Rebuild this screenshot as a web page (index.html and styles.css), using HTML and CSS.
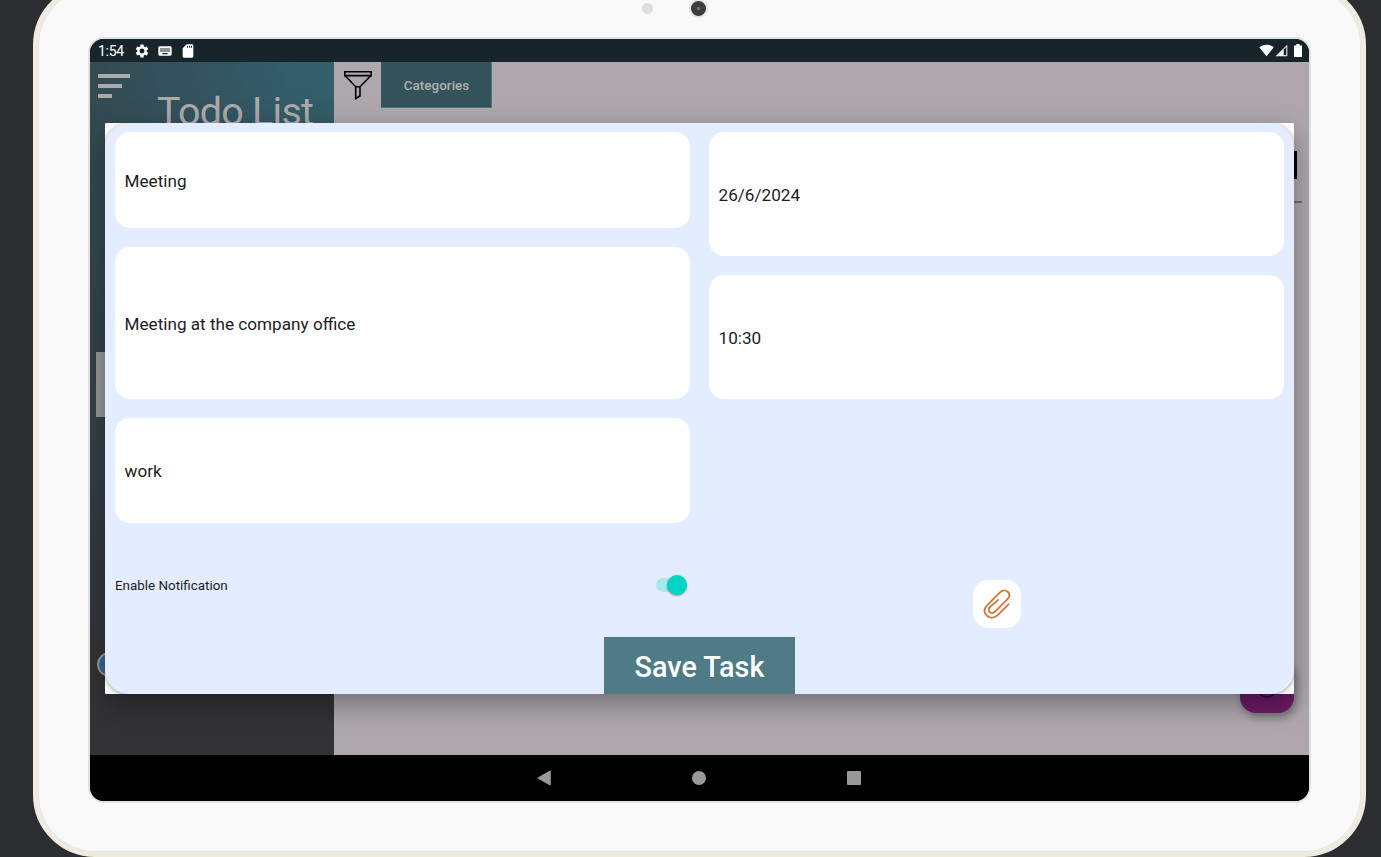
FILE: index.html
```html
<!DOCTYPE html>
<html lang="en">
<head>
<meta charset="utf-8">
<title>Todo List</title>
<link rel="stylesheet" href="styles.css">
</head>
<body>
<div class="tablet">
  <div class="bezel">
    <span class="sensor"></span>
    <span class="camera"></span>
  </div>
  <div class="screen">
    <header class="status">
      <span class="clock">1:54</span>
      <svg class="gear" width="16" height="16" viewBox="0 0 24 24"><path fill="#fff" d="M19.14 12.94c.04-.3.06-.61.06-.94s-.02-.64-.07-.94l2.03-1.58a.49.49 0 0 0 .12-.61l-1.92-3.32a.49.49 0 0 0-.59-.22l-2.39.96c-.5-.38-1.03-.7-1.62-.94l-.36-2.54a.48.48 0 0 0-.48-.41h-3.84a.47.47 0 0 0-.47.41l-.36 2.54c-.59.24-1.13.57-1.62.94l-2.39-.96a.48.48 0 0 0-.59.22L2.74 8.87a.47.47 0 0 0 .12.61l2.03 1.58c-.05.3-.09.63-.09.94s.02.64.07.94l-2.03 1.58a.49.49 0 0 0-.12.61l1.92 3.32c.12.22.37.29.59.22l2.39-.96c.5.38 1.03.7 1.62.94l.36 2.54c.05.24.24.41.48.41h3.84c.24 0 .44-.17.47-.41l.36-2.54c.59-.24 1.13-.56 1.62-.94l2.39.96c.22.08.47 0 .59-.22l1.92-3.32a.47.47 0 0 0-.12-.61zM12 15.600A3.600 3.600 0 1 1 12 8.400a3.600 3.600 0 0 1 0 7.200z"/></svg>
      <svg class="keyboard" width="16" height="16" viewBox="0 0 24 24"><path fill="#fff" d="M20 5H4c-1.100 0-1.990.9-1.990 2L2 17c0 1.100.9 2 2 2h16c1.100 0 2-.9 2-2V7c0-1.100-.9-2-2-2zm-9 3h2v2h-2V8zm0 3h2v2h-2v-2zM8 8h2v2H8V8zm0 3h2v2H8v-2zm-1 2H5v-2h2v2zm0-3H5V8h2v2zm9 7H8v-2h8v2zm0-4h-2v-2h2v2zm0-3h-2V8h2v2zm3 3h-2v-2h2v2zm0-3h-2V8h2v2z"/></svg>
      <svg class="sdcard" width="16" height="16" viewBox="0 0 24 24"><path fill="#fff" d="M18 2h-8L4.020 8 4 20c0 1.100.9 2 2 2h12c1.100 0 2-.9 2-2V4c0-1.100-.9-2-2-2zm-6 5h-1.500V4H12v3zm3 0h-1.500V4H15v3zm3 0h-1.500V4H18v3z"/></svg>
      <span class="spacer"></span>
      <svg width="15" height="13" viewBox="0 0 15 13"><path fill="#fff" d="M0.300 3.300C4.400-.2 10.600-.2 14.700 3.300L7.500 12.300z"/></svg>
      <svg class="signal" width="13" height="13" viewBox="0 0 13 13"><path fill="#fff" d="M12.300.700V12.300H.500z"/><path fill="#17252a" d="M8.700 5.500L11.300 3V11.300H8.700z"/></svg>
      <svg class="battery" width="8" height="13" viewBox="0 0 8 13"><path fill="#fff" d="M2.300 0h3.400v1.400H8V13H0V1.400h2.300z"/></svg>
    </header>
    <div class="app">
      <aside class="sidebar">
        <div class="menu"><i></i><i></i><i></i></div>
        <h1>Todo List</h1>
        <div class="chip"></div>
        <div class="avatar"></div>
        <div class="rule"></div>
      </aside>
      <main class="content">
        <div class="toolbar">
          <svg class="funnel" width="28" height="29" viewBox="0 0 28 29" fill="none" stroke="#000" stroke-width="1.600"><path d="M.8.800h26.400v3.800H.8z"/><path d="M1.200 4.800L11.700 15.800V27.500L16 25V15.800L26.800 4.800M11.700 15.800H16"/></svg>
          <button class="categories">Categories</button>
        </div>
        <div class="search"><span class="search-mark"></span><span class="search-line"></span></div>
        <div class="fab"><svg width="20" height="20" viewBox="0 0 20 20"><circle cx="10" cy="10" r="9" fill="none" stroke="#1d0545" stroke-width="1.600"/></svg></div>
      </main>
    </div>
    <nav class="navbar">
      <svg width="14" height="16" viewBox="0 0 14 16"><path fill="#999" d="M0 8L13 .5q.8 0 .8 1v13q0 1-.8 1z"/></svg>
      <span class="home"></span>
      <span class="recents"></span>
    </nav>
    <section class="dialog">
      <form class="form">
        <div class="columns">
          <div class="column">
            <div class="field title">Meeting</div>
            <div class="field description">Meeting at the company office</div>
            <div class="field category">work</div>
          </div>
          <div class="column">
            <div class="field date">26/6/2024</div>
            <div class="field time">10:30</div>
          </div>
        </div>
        <div class="options">
          <div class="notify"><span>Enable Notification</span><span class="switch"><span class="thumb"></span></span></div>
          <div class="attach-cell"><div class="attach">
            <svg width="28" height="30" viewBox="0 0 28 30" fill="none" stroke="#cf7a40" stroke-width="1.900" stroke-linecap="round" stroke-linejoin="round"><path d="M25.600 15.200L15.200 25.700C11.800 29.100 7.500 29.700 4.300 27.100C.5 24 .6 20 4 16.400L17.300 3.200C19.500 1 22.600.8 24.700 2.800C27 5 26.800 7.700 24.700 9.900L12.600 22.200C10.700 24.200 8.700 24.700 6.900 23.200C5.200 21.700 5.400 19.700 7 18L15.200 10.900"/></svg>
          </div></div>
        </div>
        <div class="actions"><button type="button" class="save">Save Task</button></div>
      </form>
    </section>
  </div>
</div>
</body>
</html>
```
FILE: styles.css
```css
* { box-sizing: border-box; }
body {
  margin: 0;
  width: 1381px;
  height: 857px;
  overflow: hidden;
  background: #2c2d31;
  font-family: Roboto, sans-serif;
}
button { border: 0; padding: 0; font-family: inherit; }
svg { display: block; flex: none; }
.tablet {
  width: 1333px;
  height: 874px;
  margin: -17px 0 0 33px;
  border: 5px solid #f0ebe0;
  border-radius: 62px;
  background: #f9f9f9;
  box-shadow: inset 0 0 0 1px #e6e4dc;
}
.bezel {
  display: flex;
  align-items: center;
  justify-content: center;
  height: 49px;
  padding: 0 13px 8px 0;
}
.sensor { width: 11px; height: 11px; border-radius: 50%; background: #dedede; margin-right: 36px; margin-left: -36px; }
.camera { width: 19px; height: 19px; border-radius: 50%; border: 2px solid #e5e5e5; background: radial-gradient(circle, #8a7078 0 1px, #3d3d3f 2px); }
.screen {
  position: relative;
  width: 1223px;
  height: 766px;
  margin-left: 50px;
  border: 2px solid #e0e0e0;
  border-radius: 16px;
  overflow: hidden;
  background: #000;
}
.status {
  height: 23px;
  padding: 0 7px 0 8px;
  display: flex;
  align-items: center;
  background: #17252a;
  color: #fff;
}
.clock { font-size: 14px; line-height: 23px; width: 36px; padding-top: 1px; letter-spacing: -0.300px; }
.keyboard { margin-left: 7px; }
.sdcard { margin-left: 7px; }
.spacer { flex: 1; }
.signal { margin-left: 1px; }
.battery { margin-left: 6px; }
.app { height: 693px; display: flex; }
.sidebar {
  width: 244px;
  padding: 12px 8px 0;
  background:
    linear-gradient(180deg, rgba(51,51,53,0) 0, rgba(51,51,53,0.5) 50%, #333335 88%),
    linear-gradient(100deg, #344a52 0, #335460 28%, #335e6b 55%, #33606d 82%, #30545f 100%);
}
.menu { display: flex; flex-direction: column; gap: 6px; height: 24px; }
.menu i { height: 4px; flex: none; background: #aaa; }
.menu i:nth-child(1) { width: 32px; }
.menu i:nth-child(2) { width: 24px; }
.menu i:nth-child(3) { width: 14px; }
.sidebar h1 {
  margin: -9px 0 0 59px;
  font-size: 39.500px;
  line-height: 46px;
  height: 45px;
  font-weight: 400;
  letter-spacing: -0.750px;
  color: #aaa;
  white-space: nowrap;
}
.chip { width: 40px; height: 65px; margin: 218px 0 0 -2px; background: #999; }
.avatar { width: 25px; height: 25px; margin: 235px 0 0 -1px; border: 2px solid #999; border-radius: 50%; background: #346890; }
.rule { height: 1px; margin: 69px -4px 0; background: #303031; }
.content { width: 975px; background: #aea8ad; display: flex; flex-direction: column; }
.toolbar { display: flex; height: 46px; }
.funnel { margin: 9px 9px 0 10px; }
.categories {
  width: 111px;
  height: 46px;
  background: #34545b;
  border-right: 1px solid #58747b;
  border-bottom: 1px solid #58747b;
  color: #aeb0b1;
  font-size: 13.500px;
  font-weight: 500;
  padding-left: 1px;
}
.search { display: flex; flex-direction: column; align-items: flex-end; padding-top: 43px; }
.search-mark { width: 20px; height: 28px; margin-right: 12px; background: #000; }
.search-line { width: 40px; height: 2px; margin: 22px 7px 0 0; background: #6c696c; }
.fab {
  width: 54px;
  height: 54px;
  margin: auto 15px 42px auto;
  padding: 19px 17px;
  border-radius: 16px;
  background: #6c1a66;
  box-shadow: 2px 4px 9px rgba(0,0,0,0.350);
}
.navbar { height: 46px; display: flex; align-items: center; justify-content: center; gap: 141px; background: #000; padding-right: 2px; }
.home { width: 14px; height: 14px; border-radius: 50%; background: #999; }
.recents { width: 14px; height: 14px; background: #999; border-radius: 1px; }
.dialog {
  position: absolute;
  left: 15px;
  top: 84px;
  width: 1189px;
  height: 571px;
  background: #fff;
  border-radius: 1px;
  box-shadow: 0 10px 28px rgba(0,0,0,0.350);
}
.form {
  height: 571px;
  padding: 9px 10px 0;
  border-radius: 24px;
  background: #e4edff;
  box-shadow: 0 1px 5px rgba(0,0,0,0.400);
  clip-path: inset(0);
  display: flex;
  flex-direction: column;
}
.columns { display: flex; gap: 19px; height: 391px; }
.column { flex: 1; display: flex; flex-direction: column; gap: 19px; }
.field {
  display: flex;
  align-items: center;
  padding: 1px 9.500px 0;
  border-radius: 15px;
  background: #fff;
  color: #1c1c1e;
  font-size: 17.150px;
}
.title { height: 96px; }
.description { height: 152px; }
.category { height: 105px; }
.date { height: 124px; }
.time { height: 124px; }
.options { display: flex; gap: 19px; height: 114px; }
.notify { flex: 1; display: flex; align-items: center; justify-content: space-between; padding: 10px 3px 0 0; font-size: 13.400px; color: #1c1c1e; }
.switch { width: 31px; height: 14px; margin-right: 0; border-radius: 7px; background: #a9e8ec; display: flex; align-items: center; justify-content: flex-end; transform: translateX(-2px); }
.thumb { width: 20px; height: 20px; flex: none; border-radius: 50%; background: #03d5c4; box-shadow: 0 1px 2px rgba(0,0,0,0.400); }
.attach-cell { flex: 1; display: flex; justify-content: center; padding-top: 57px; }
.attach { width: 48px; height: 48px; border-radius: 15px; background: #fff; display: flex; align-items: center; justify-content: center; }
.actions { display: flex; justify-content: center; }
.save { width: 191px; height: 57px; background: #4e7b86; color: #fff; font-size: 28.800px; font-weight: 500; padding-top: 3px; }
```
